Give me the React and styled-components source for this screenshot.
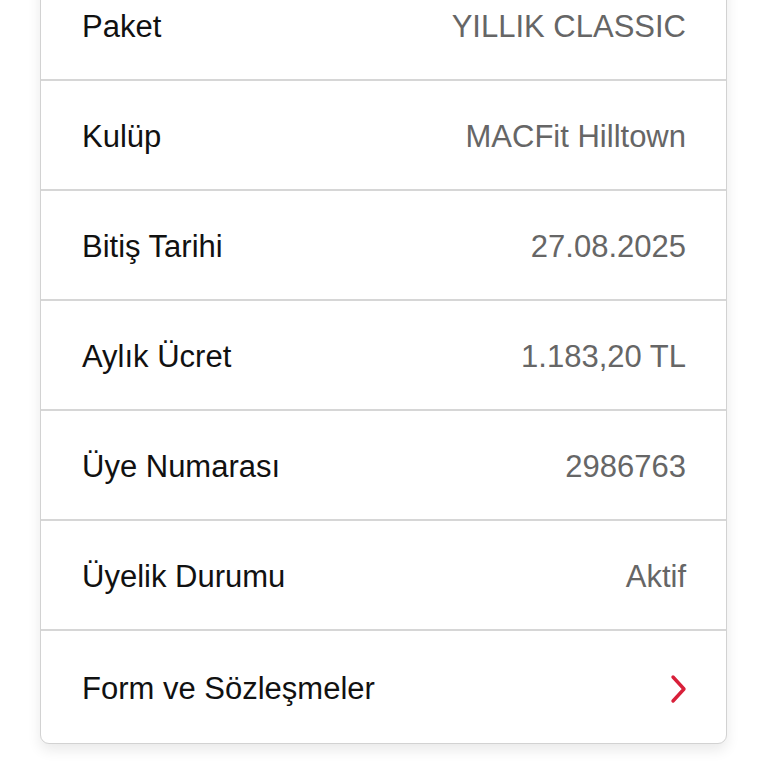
import React from 'react';
import styled, {createGlobalStyle} from 'styled-components';

const Global = createGlobalStyle`
  html, body {
    margin: 0;
    padding: 0;
    background: #ffffff;
    overflow: hidden;
  }
  body {
    font-family: "Liberation Sans", Arial, sans-serif;
  }
`

const Page = styled.div`
  width: 768px;
  height: 768px;
  padding: 0 41px 0 40px;
  box-sizing: border-box;
  display: flex;
  flex-direction: column;
`

const Card = styled.div`
  margin-top: -30px;
  background: #fff;
  border: 1.5px solid #d2d2d2;
  border-radius: 9px;
  box-shadow: 0 6px 14px rgba(0, 0, 0, 0.09);
  overflow: hidden;
  flex-shrink: 0;
`

const Row = styled.div`
  display: flex;
  align-items: center;
  justify-content: space-between;
  box-sizing: border-box;
  height: ${p => p.$last ? 112 : 110}px;
  padding: 4px 40px 0 41px;
  border-bottom: ${p => p.$last ? 'none' : '2px solid #d6d6d6'};
`

const Label = styled.span`
  font-size: 31px;
  color: #111;
`

const Value = styled.span`
  font-size: 31px;
  color: #666;
`

const Chevron = () => (
  <svg width="18" height="30" viewBox="0 0 18 30" style={{marginRight: '-1px'}}>
    <path d="M4 3 L15 15 L4 27" fill="none" stroke="#d8203a" strokeWidth="3.4" strokeLinecap="round" strokeLinejoin="round" />
  </svg>
)

const rows = [
  ['Paket', 'YILLIK CLASSIC'],
  ['Kulüp', 'MACFit Hilltown'],
  ['Bitiş Tarihi', '27.08.2025'],
  ['Aylık Ücret', '1.183,20 TL'],
  ['Üye Numarası', '2986763'],
  ['Üyelik Durumu', 'Aktif'],
]

export default function App() {
  return (
    <Page>
      <Global />
      <Card>
        {rows.map(([l, v]) => (
          <Row key={l}>
            <Label>{l}</Label>
            <Value>{v}</Value>
          </Row>
        ))}
        <Row $last>
          <Label>Form ve Sözleşmeler</Label>
          <Chevron />
        </Row>
      </Card>
    </Page>
  );
}
